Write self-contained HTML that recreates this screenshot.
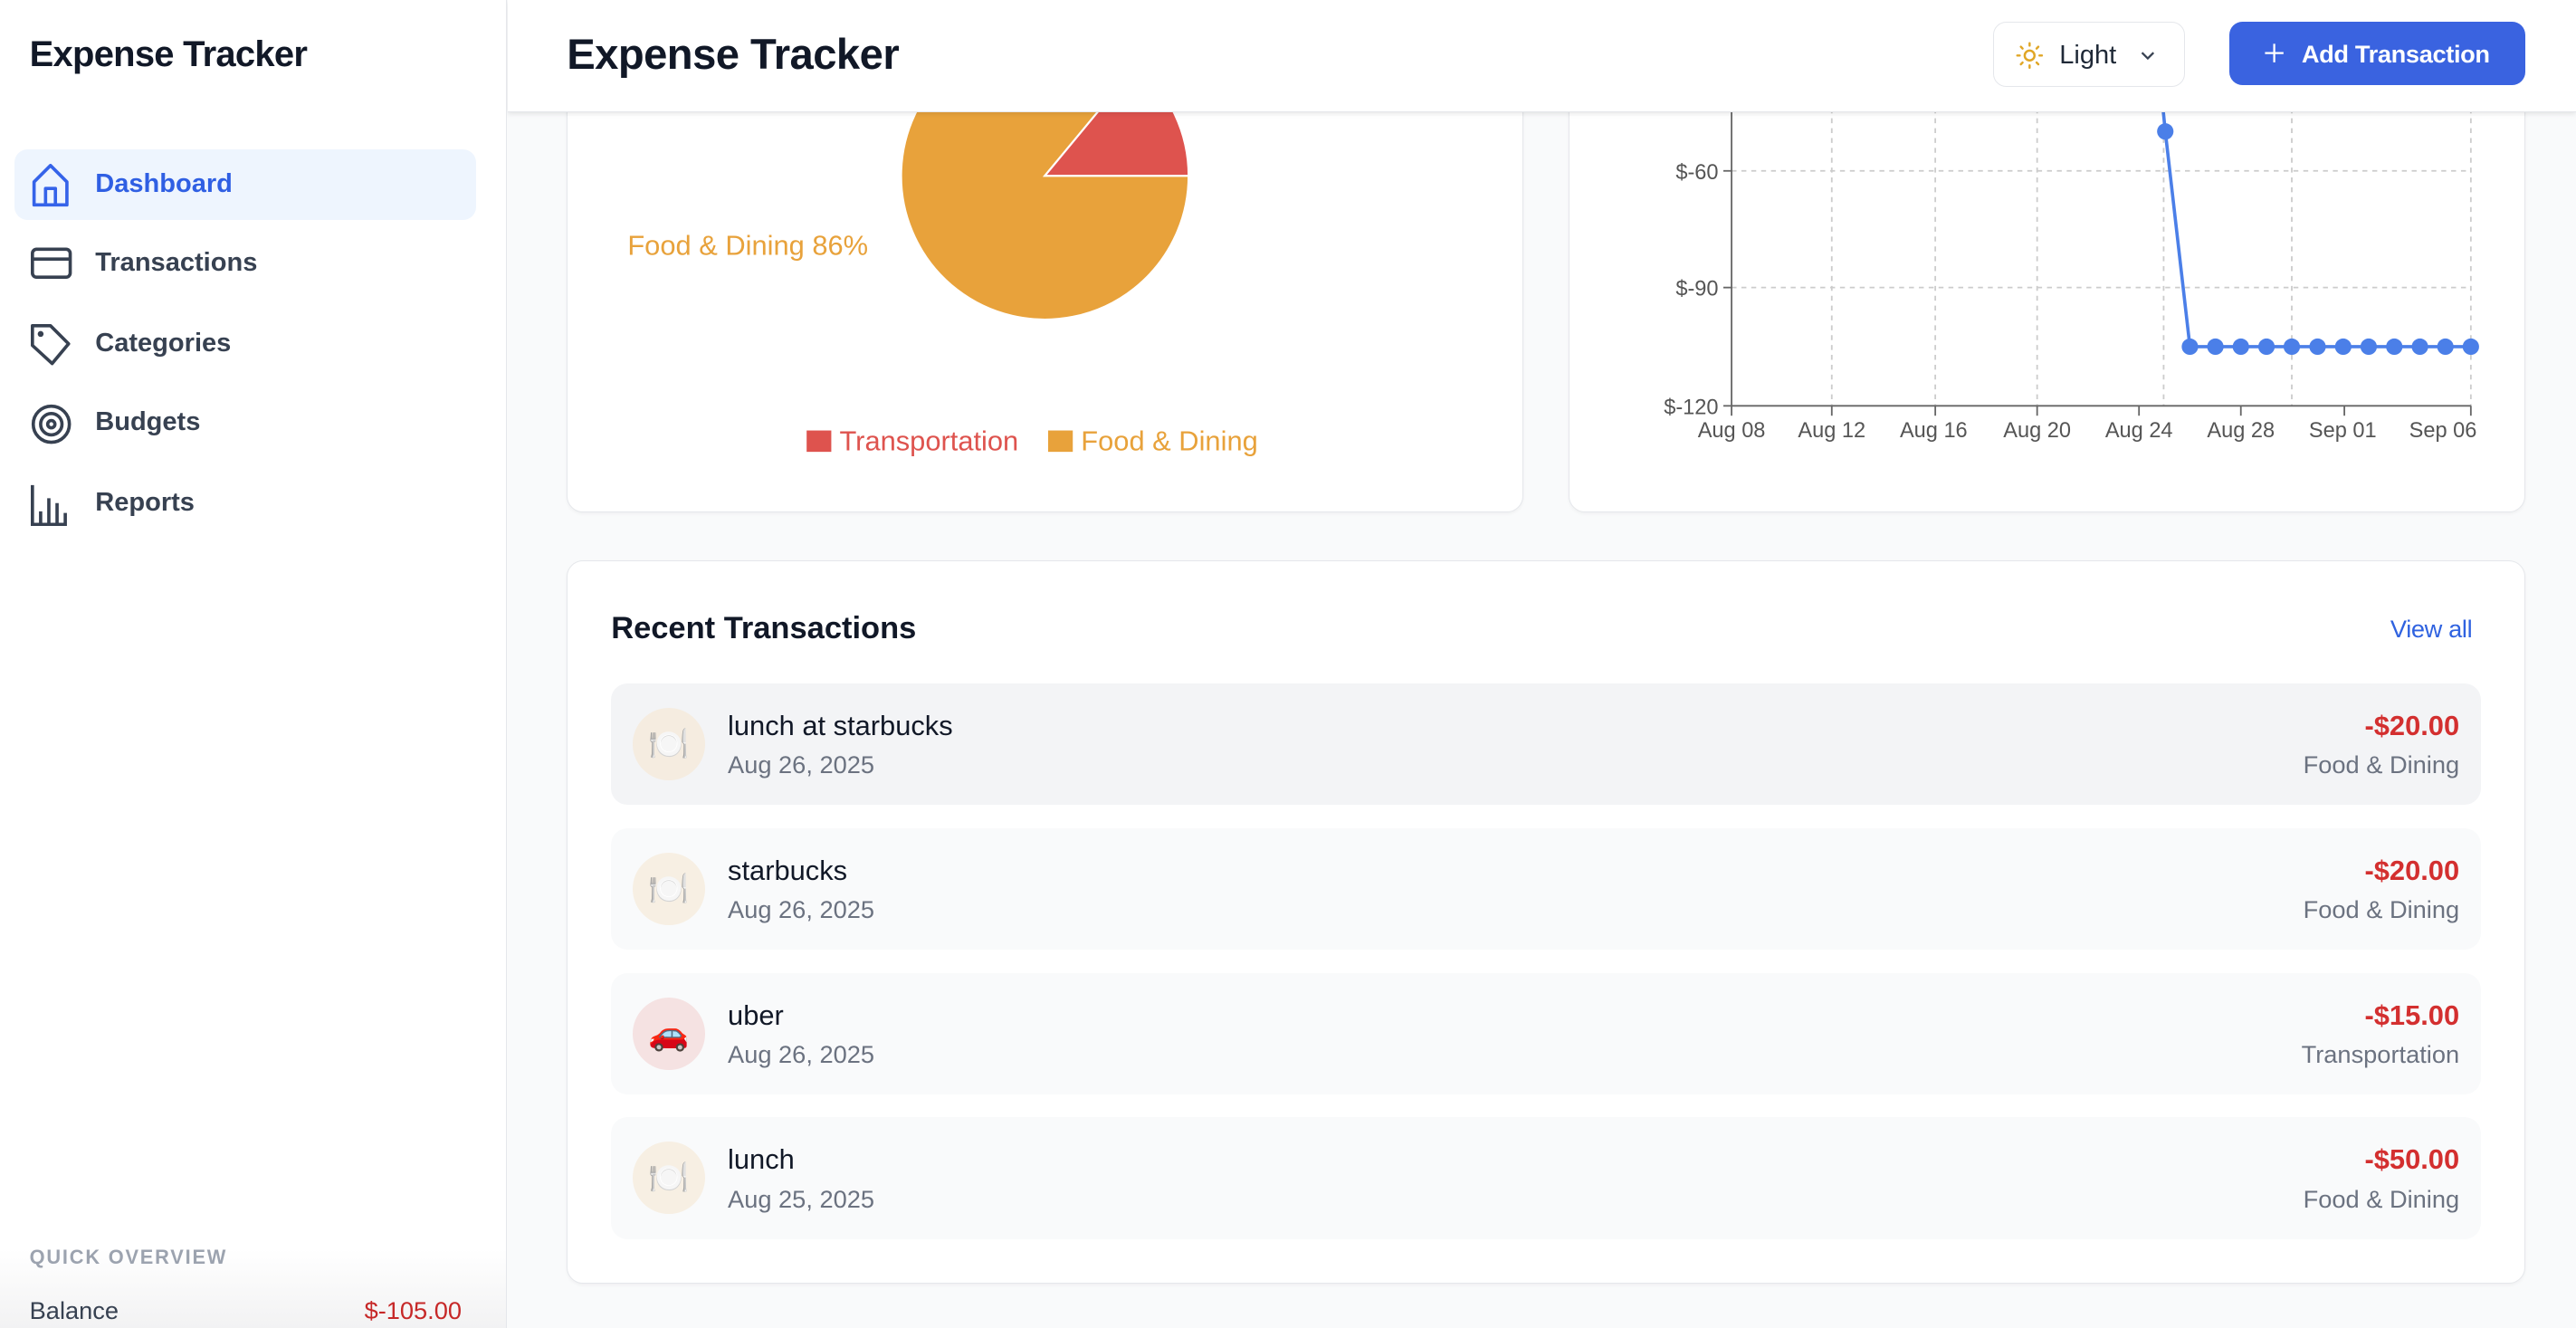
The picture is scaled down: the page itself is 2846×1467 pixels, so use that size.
<!DOCTYPE html>
<html><head><meta charset="utf-8"><style>
html,body{margin:0;padding:0;width:2846px;height:1467px;overflow:hidden;background:#f9fafb;}
#r{zoom:1.81505;width:1568px;height:809px;position:relative;font-family:"Liberation Sans",Arial,sans-serif;overflow:hidden;background:#f9fafb;}
.a{position:absolute;}
.side{left:0;top:0;width:308px;height:809px;background:linear-gradient(#fff 0,#fff 760px,#f2f2f3 809px);border-right:1px solid #e5e7eb;}
.nav{left:9px;width:281px;height:43px;border-radius:8px;}
.nav svg{position:absolute;left:10px;top:9px;}
.nav span{position:absolute;left:49px;top:12px;font-size:16px;font-weight:bold;color:#374151;}
.card{background:#fff;border:1px solid #e5e7eb;border-radius:10px;box-shadow:0 1px 2px rgba(0,0,0,.04);}
.row{left:372px;width:1138px;height:74px;border-radius:10px;background:#f9fafb;}
.ic{position:absolute;left:13px;top:15px;width:44px;height:44px;border-radius:50%;text-align:center;line-height:44px;font-size:20px;}
.t1{position:absolute;left:71px;top:16px;font-size:17px;color:#111827;}
.t2{position:absolute;left:71px;top:41px;font-size:15px;color:#6b7280;}
.t3{position:absolute;right:13px;top:16px;font-size:17px;font-weight:bold;color:#d32f2f;}
.t4{position:absolute;right:13px;top:41px;font-size:15px;color:#6b7280;}
</style></head><body><div id="r">

<div class="a card" style="left:345px;top:20px;width:581px;height:291px;"></div>
<div class="a card" style="left:955px;top:20px;width:581px;height:291px;"></div>

<svg class="a" style="left:0;top:0" width="1568" height="340" font-family="Liberation Sans, Arial, sans-serif">
  <path d="M636,107 L723.5,107 A87.5,87.5 0 1 1 691.8,39.6 Z" fill="#e8a23b" stroke="#fff" stroke-width="1.2"/>
  <path d="M636,107 L691.8,39.6 A87.5,87.5 0 0 1 723.5,107 Z" fill="#de534e" stroke="#fff" stroke-width="1.2"/>
  <text x="382" y="155" font-size="17" fill="#e8a23b">Food &amp; Dining 86%</text>
  <rect x="491" y="262" width="15" height="13" fill="#de534e"/>
  <text x="511" y="274" font-size="17" fill="#de534e">Transportation</text>
  <rect x="638" y="262" width="15" height="13" fill="#e8a23b"/>
  <text x="658" y="274" font-size="17" fill="#e8a23b">Food &amp; Dining</text>

  <g stroke="#ccc" stroke-dasharray="3,3" stroke-width="1">
    <line x1="1054" y1="104" x2="1504" y2="104"/>
    <line x1="1054" y1="175" x2="1504" y2="175"/>
    <line x1="1115" y1="60" x2="1115" y2="247"/>
    <line x1="1178" y1="60" x2="1178" y2="247"/>
    <line x1="1240" y1="60" x2="1240" y2="247"/>
    <line x1="1317" y1="60" x2="1317" y2="247"/>
    <line x1="1395" y1="60" x2="1395" y2="247"/>
    <line x1="1504" y1="60" x2="1504" y2="247"/>
  </g>
  <g stroke="#666" stroke-width="1">
    <line x1="1054" y1="60" x2="1054" y2="247"/>
    <line x1="1054" y1="247" x2="1504" y2="247"/>
    <line x1="1049" y1="104" x2="1054" y2="104"/>
    <line x1="1049" y1="175" x2="1054" y2="175"/>
    <line x1="1049" y1="247" x2="1054" y2="247"/>
    <line x1="1054" y1="247" x2="1054" y2="253"/>
    <line x1="1115" y1="247" x2="1115" y2="253"/>
    <line x1="1178" y1="247" x2="1178" y2="253"/>
    <line x1="1240" y1="247" x2="1240" y2="253"/>
    <line x1="1302" y1="247" x2="1302" y2="253"/>
    <line x1="1364" y1="247" x2="1364" y2="253"/>
    <line x1="1427" y1="247" x2="1427" y2="253"/>
    <line x1="1504" y1="247" x2="1504" y2="253"/>
  </g>
  <g font-size="13" fill="#555" text-anchor="end">
    <text x="1046" y="109">$-60</text>
    <text x="1046" y="180">$-90</text>
    <text x="1046" y="252">$-120</text>
  </g>
  <g font-size="13" fill="#555" text-anchor="middle">
    <text x="1054" y="266">Aug 08</text><text x="1115" y="266">Aug 12</text><text x="1177" y="266">Aug 16</text>
    <text x="1240" y="266">Aug 20</text><text x="1302" y="266">Aug 24</text><text x="1364" y="266">Aug 28</text>
    <text x="1426" y="266">Sep 01</text><text x="1487" y="266">Sep 06</text>
  </g>
  <polyline points="1316,60 1318,80 1333,211 1504,211" fill="none" stroke="#4b7fe8" stroke-width="2"/>
  <g fill="#4b7fe8">
    <circle cx="1318" cy="80" r="5"/>
    <circle cx="1333" cy="211" r="5"/><circle cx="1348.5" cy="211" r="5"/><circle cx="1364" cy="211" r="5"/>
    <circle cx="1379.6" cy="211" r="5"/><circle cx="1395" cy="211" r="5"/><circle cx="1410.7" cy="211" r="5"/>
    <circle cx="1426.3" cy="211" r="5"/><circle cx="1441.8" cy="211" r="5"/><circle cx="1457.4" cy="211" r="5"/>
    <circle cx="1473" cy="211" r="5"/><circle cx="1488.5" cy="211" r="5"/><circle cx="1504" cy="211" r="5"/>
  </g>
</svg>

<div class="a card" style="left:345px;top:341px;width:1191px;height:439px;"></div>
<div class="a" style="left:372px;top:372px;font-size:19px;font-weight:bold;color:#111827;">Recent Transactions</div>
<div class="a" style="left:1455px;top:374px;font-size:15px;color:#2f62e0;letter-spacing:-0.2px;">View all</div>

<div class="a row" style="top:416px;background:#f3f4f6;"><div class="ic" style="background:#f5ece0">🍽️</div><div class="t1">lunch at starbucks</div><div class="t2">Aug 26, 2025</div><div class="t3">-$20.00</div><div class="t4">Food &amp; Dining</div></div>
<div class="a row" style="top:504px;"><div class="ic" style="background:#f7efe3">🍽️</div><div class="t1">starbucks</div><div class="t2">Aug 26, 2025</div><div class="t3">-$20.00</div><div class="t4">Food &amp; Dining</div></div>
<div class="a row" style="top:592px;"><div class="ic" style="background:#f5e2e2">🚗</div><div class="t1">uber</div><div class="t2">Aug 26, 2025</div><div class="t3">-$15.00</div><div class="t4">Transportation</div></div>
<div class="a row" style="top:680px;"><div class="ic" style="background:#f7efe3">🍽️</div><div class="t1">lunch</div><div class="t2">Aug 25, 2025</div><div class="t3">-$50.00</div><div class="t4">Food &amp; Dining</div></div>

<div class="a" style="left:309px;top:0;width:1259px;height:68px;background:#fff;box-shadow:0 1px 3px rgba(0,0,0,.1);border-bottom:1px solid #e5e7eb;"></div>
<div class="a" style="left:345px;top:18px;font-size:26px;font-weight:bold;color:#111827;letter-spacing:-0.3px;">Expense Tracker</div>
<div class="a" style="left:1213px;top:13px;width:116px;height:39px;border:1px solid #e5e7eb;border-radius:8px;background:#fff;">
  <svg style="position:absolute;left:13px;top:11px" width="18" height="18" viewBox="0 0 24 24" fill="none" stroke="#e0a626" stroke-width="1.8" stroke-linecap="round"><circle cx="12" cy="12" r="4"/><path d="M12 2v2M12 20v2M4.9 4.9l1.4 1.4M17.7 17.7l1.4 1.4M2 12h2M20 12h2M4.9 19.1l1.4-1.4M17.7 6.3l1.4-1.4"/></svg>
  <span style="position:absolute;left:40px;top:11px;font-size:16px;color:#1f2937;">Light</span>
  <svg style="position:absolute;left:88px;top:14px" width="12" height="12" viewBox="0 0 24 24" fill="none" stroke="#374151" stroke-width="2.5"><path d="M5 9l7 7 7-7"/></svg>
</div>
<div class="a" style="left:1357px;top:13px;width:180px;height:39px;border-radius:8px;background:#3a63e0;">
  <svg style="position:absolute;left:20px;top:12px" width="15" height="15" viewBox="0 0 24 24" fill="none" stroke="#fff" stroke-width="2"><path d="M12 3v18M3 12h18"/></svg>
  <span style="position:absolute;left:44px;top:11px;font-size:15px;font-weight:bold;color:#fff;letter-spacing:-0.2px;">Add Transaction</span>
</div>

<div class="a side"></div>
<div class="a" style="left:18px;top:21px;font-size:22px;font-weight:bold;color:#111827;letter-spacing:-0.4px;">Expense Tracker</div>
<div class="a nav" style="top:91px;background:#eef5fe;">
  <svg width="24" height="26" viewBox="0 0 24 26" fill="none" stroke="#3563e9" stroke-width="2" stroke-linejoin="round"><path d="M2 11L12 1l10 10v14H2z"/><path d="M9 25V15h6v10"/></svg>
  <span style="color:#2f5fe3">Dashboard</span></div>
<div class="a nav" style="top:139px;">
  <svg width="25" height="24" viewBox="0 0 25 24" fill="none" stroke="#374151" stroke-width="2"><rect x="1" y="3.5" width="23" height="17" rx="2.5"/><path d="M1 9.5h23"/></svg>
  <span>Transactions</span></div>
<div class="a nav" style="top:188px;">
  <svg width="25" height="26" viewBox="0 0 25 26" fill="none" stroke="#374151" stroke-width="2" stroke-linejoin="round"><path d="M1 1h11l11 11-10 12L1 13z"/><circle cx="6" cy="6" r="0.8" fill="#374151"/></svg>
  <span>Categories</span></div>
<div class="a nav" style="top:236px;">
  <svg width="25" height="26" viewBox="0 0 25 26" fill="none" stroke="#374151" stroke-width="2"><circle cx="12.5" cy="13" r="11"/><circle cx="12.5" cy="13" r="6.5"/><circle cx="12.5" cy="13" r="2.2"/></svg>
  <span>Budgets</span></div>
<div class="a nav" style="top:285px;">
  <svg width="25" height="26" viewBox="0 0 25 26" fill="none" stroke="#374151" stroke-width="2"><path d="M1 1v24h21"/><path d="M6 24v-7M11 24V9M16 24v-12M21 24v-6"/></svg>
  <span>Reports</span></div>
<div class="a" style="left:18px;top:758px;font-size:12px;font-weight:bold;color:#9ca3af;letter-spacing:1px;">QUICK OVERVIEW</div>
<div class="a" style="left:18px;top:789px;font-size:15px;color:#374151;">Balance</div>
<div class="a" style="right:1287px;top:789px;font-size:15px;color:#c62828;">$-105.00</div>

</div></body></html>
